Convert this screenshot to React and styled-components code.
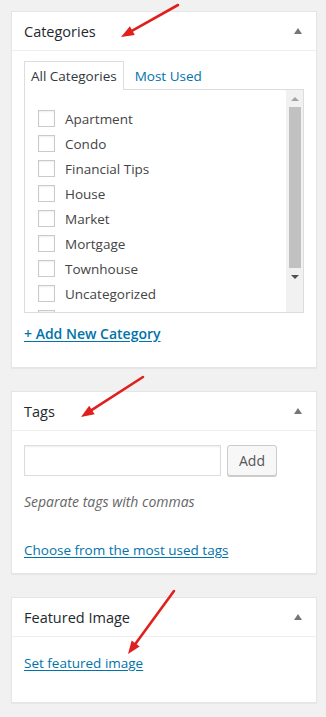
import React from "react";
import styled, { createGlobalStyle } from "styled-components";

const GlobalStyle = createGlobalStyle`
  body {
    margin: 0;
    background: #f1f1f1;
    font-family: "Open Sans", "Noto Sans", sans-serif;
    color: #444;
  }
`;

const Page = styled.div`
  position: relative;
  width: 326px;
  min-height: 717px;
  padding: 11px 9px 16px 11px;
  box-sizing: border-box;
  display: flex;
  flex-direction: column;
  gap: 23px;
`;

const Box = styled.div`
  background: #fff;
  border: 1px solid #e5e5e5;
  box-shadow: 0 1px 1px rgba(0, 0, 0, 0.04);
`;

const Header = styled.div`
  height: 38px;
  border-bottom: 1px solid #eee;
  display: flex;
  align-items: center;
  justify-content: space-between;
  padding: 0 12px;
`;

const Title = styled.h2`
  margin: 0;
  font-size: 14.5px;
  font-weight: 400;
  color: #23282d;
`;

const Toggle = styled.span`
  width: 0;
  height: 0;
  margin-right: 2px;
  border-left: 4px solid transparent;
  border-right: 4px solid transparent;
  border-bottom: 6px solid #72777c;
`;

const Inside = styled.div`
  padding: ${(p) => p.$pad || "10px 12px 12px"};
`;

const Tabs = styled.div`
  display: flex;
  align-items: flex-end;
`;

const Tab = styled.div`
  height: 28px;
  display: flex;
  align-items: center;
  padding: 0 ${(p) => (p.$active ? "6px" : "10px")};
  font-size: 13.5px;
  color: ${(p) => (p.$active ? "#32373c" : "#0073aa")};
  background: ${(p) => (p.$active ? "#fff" : "transparent")};
  border: 1px solid ${(p) => (p.$active ? "#ddd" : "transparent")};
  border-bottom: none;
  margin-bottom: -1px;
  position: relative;
  z-index: 1;
`;

const ListBox = styled.div`
  height: 222px;
  border: 1px solid #ddd;
  display: flex;
  overflow: hidden;
`;

const List = styled.ul`
  flex: 1;
  list-style: none;
  margin: 0;
  padding: 16px 0 0 13px;
  overflow: hidden;
`;

const Item = styled.li`
  height: 25px;
  flex-shrink: 0;
  display: flex;
  align-items: center;
  gap: 10px;
  font-size: 13.5px;
  color: #444;
`;

const Check = styled.span`
  width: 15px;
  height: 15px;
  flex-shrink: 0;
  border: 1px solid #c7cbcf;
  background: #fff;
  box-shadow: inset 0 1px 2px rgba(0, 0, 0, 0.07);
`;

const Scrollbar = styled.div`
  width: 17px;
  background: #f1f1f1;
  display: flex;
  flex-direction: column;
  align-items: center;
`;

const ScrollArrow = styled.div`
  height: 17px;
  display: flex;
  align-items: center;
  justify-content: center;
  &::after {
    content: "";
    border-left: 4px solid transparent;
    border-right: 4px solid transparent;
    ${(p) =>
      p.$down
        ? "border-top: 4px solid #505050;"
        : "border-bottom: 4px solid #a3a3a3;"}
  }
`;

const Thumb = styled.div`
  width: 12px;
  height: 161px;
  background: #c1c1c1;
`;

const Link = styled.a`
  display: inline-block;
  font-size: ${(p) => p.$size || "13.5px"};
  font-weight: ${(p) => p.$weight || 400};
  color: #0073aa;
  text-decoration: underline;
  text-underline-offset: 2px;
  cursor: pointer;
`;

const AddRow = styled.div`
  padding: 11px 0 24px;
  line-height: 19px;
`;

const TagRow = styled.div`
  display: flex;
  gap: 6px;
  padding-top: 4px;
`;

const TagInput = styled.input`
  width: 197px;
  height: 31px;
  box-sizing: border-box;
  border: 1px solid #ddd;
  box-shadow: inset 0 1px 2px rgba(0, 0, 0, 0.07);
  font: inherit;
  font-size: 14px;
  padding: 3px 6px;
  margin: 0;
`;

const Button = styled.button`
  width: 50px;
  height: 31px;
  box-sizing: border-box;
  font-family: inherit;
  font-size: 14px;
  color: #555;
  background: #f7f7f7;
  border: 1px solid #ccc;
  border-radius: 3px;
  box-shadow: 0 1px 0 #ccc;
  padding: 0;
`;

const Hint = styled.p`
  margin: 16px 0 0;
  font-size: 14px;
  font-style: italic;
  color: #666;
  line-height: 19px;
`;

const CloudRow = styled.div`
  margin-top: 29px;
  line-height: 19px;
`;

const Arrows = styled.svg`
  position: absolute;
  left: 0;
  top: 0;
  pointer-events: none;
`;

const categories = [
  "Apartment",
  "Condo",
  "Financial Tips",
  "House",
  "Market",
  "Mortgage",
  "Townhouse",
  "Uncategorized",
];

const arrows = [
  [178, 5, 121, 37],
  [143, 377, 81, 417],
  [174, 591, 128, 654],
];

const Arrow = ({ x1, y1, x2, y2 }) => {
  const a = Math.atan2(y2 - y1, x2 - x1);
  const len = 13;
  const w = 5;
  const bx = x2 - Math.cos(a) * len;
  const by = y2 - Math.sin(a) * len;
  const px = -Math.sin(a) * w;
  const py = Math.cos(a) * w;
  return (
    <g>
      <line x1={x1} y1={y1} x2={bx} y2={by} stroke="#e0201e" strokeWidth="2.6" strokeLinecap="round" />
      <polygon
        points={`${x2},${y2} ${bx + px},${by + py} ${bx - px},${by - py}`}
        fill="#e0201e"
      />
    </g>
  );
};

const App = () => (
  <Page>
    <GlobalStyle />
    <Box>
      <Header>
        <Title>Categories</Title>
        <Toggle />
      </Header>
      <Inside $pad="10px 12px 0">
        <Tabs>
          <Tab $active>All Categories</Tab>
          <Tab>Most Used</Tab>
        </Tabs>
        <ListBox>
          <List>
            {categories.map((c) => (
              <Item key={c}>
                <Check />
                {c}
              </Item>
            ))}
            <Item aria-hidden>
              <Check />
            </Item>
          </List>
          <Scrollbar>
            <ScrollArrow />
            <Thumb />
            <ScrollArrow $down />
          </Scrollbar>
        </ListBox>
        <AddRow>
          <Link $size="14px" $weight={600}>+ Add New Category</Link>
        </AddRow>
      </Inside>
    </Box>
    <Box>
      <Header>
        <Title>Tags</Title>
        <Toggle />
      </Header>
      <Inside $pad="10px 12px 13px">
        <TagRow>
          <TagInput type="text" />
          <Button>Add</Button>
        </TagRow>
        <Hint>Separate tags with commas</Hint>
        <CloudRow>
          <Link>Choose from the most used tags</Link>
        </CloudRow>
      </Inside>
    </Box>
    <Box>
      <Header>
        <Title>Featured Image</Title>
        <Toggle />
      </Header>
      <Inside $pad="14px 12px 29px">
        <Link>Set featured image</Link>
      </Inside>
    </Box>
    <Arrows width="326" height="717">
      {arrows.map(([x1, y1, x2, y2], i) => (
        <Arrow key={i} x1={x1} y1={y1} x2={x2} y2={y2} />
      ))}
    </Arrows>
  </Page>
);

export default App;
